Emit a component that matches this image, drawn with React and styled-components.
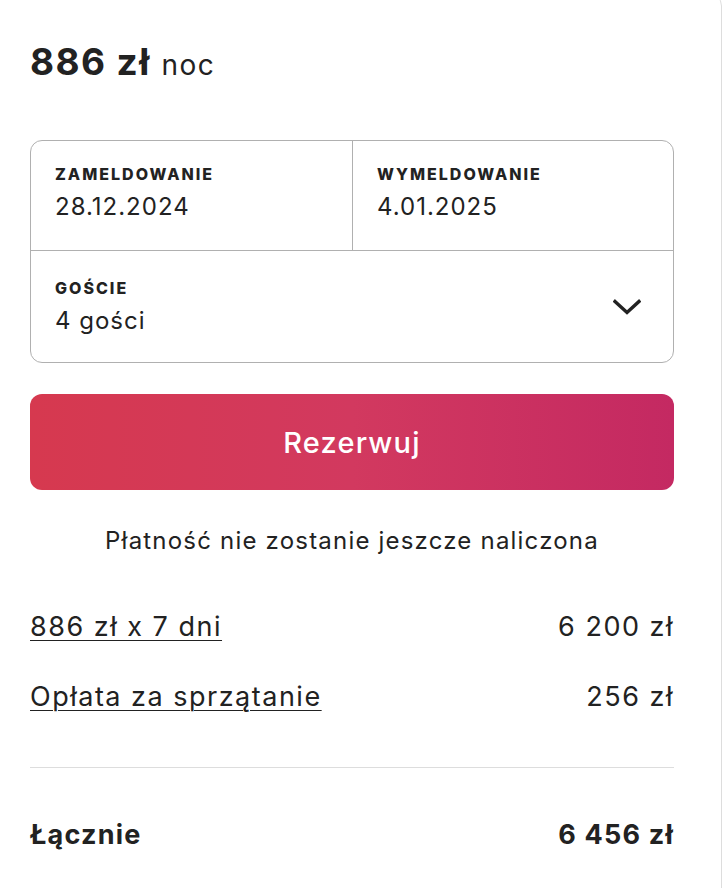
import styled, { createGlobalStyle } from "styled-components";

const GlobalStyle = createGlobalStyle`
  html, body {
    margin: 0;
    padding: 0;
    background: #fff;
    overflow: hidden;
  }
  body {
    font-family: Inter, "Noto Sans", "Liberation Sans", sans-serif;
    color: #222;
  }
`;

const fees = [
  { label: "886 zł x 7 dni", value: "6 200 zł" },
  { label: "Opłata za sprzątanie", value: "256 zł" },
];

function App() {
  return (
    <>
      <GlobalStyle />
      <Page>
        <Card>
          <Price>
            <Amount>886 zł</Amount>
            <Unit>noc</Unit>
          </Price>

          <Picker>
            <Cell>
              <Label>Zameldowanie</Label>
              <Value>28.12.2024</Value>
            </Cell>
            <Cell $divider>
              <Label>Wymeldowanie</Label>
              <Value>4.01.2025</Value>
            </Cell>
            <GuestCell>
              <div>
                <Label>Goście</Label>
                <Value>4 gości</Value>
              </div>
              <svg width="28" height="16" viewBox="0 0 28 16" fill="none">
                <path
                  d="M2 2.5 L14 13.5 L26 2.5"
                  stroke="#222"
                  strokeWidth="3.4"
                  strokeLinecap="square"
                />
              </svg>
            </GuestCell>
          </Picker>

          <ReserveButton>Rezerwuj</ReserveButton>
          <Note>Płatność nie zostanie jeszcze naliczona</Note>

          <FeeList>
            {fees.map((f) => (
              <FeeRow key={f.label}>
                <FeeLink>{f.label}</FeeLink>
                <span>{f.value}</span>
              </FeeRow>
            ))}
          </FeeList>

          <Divider />

          <TotalRow>
            <span>Łącznie</span>
            <span>6 456 zł</span>
          </TotalRow>
        </Card>
      </Page>
    </>
  );
}

export default App;

const Page = styled.div`
  width: 724px;
  height: 888px;
  overflow: hidden;
`;

const Card = styled.div`
  margin: -8px 2px 0 -30px;
  padding: 46px 47px 200px 59px;
  border: 1px solid #dddddd;
  border-radius: 14px;
`;

const Price = styled.div`
  display: flex;
  align-items: baseline;
  gap: 11px;
  height: 52px;
`;

const Amount = styled.span`
  font-size: 37px;
  font-weight: 700;
  letter-spacing: 1.4px;
`;

const Unit = styled.span`
  font-size: 28px;
  font-weight: 400;
  letter-spacing: 1.4px;
`;

const Picker = styled.div`
  margin-top: 49px;
  display: grid;
  grid-template-columns: 1fr 1fr;
  border: 1px solid #b0b0b0;
  border-radius: 12px;
`;

const Cell = styled.div`
  height: 110px;
  padding: 0 24px 5px;
  box-sizing: border-box;
  display: flex;
  flex-direction: column;
  justify-content: center;
  border-bottom: 1px solid #b0b0b0;
  border-left: ${(p) => (p.$divider ? "1px solid #b0b0b0" : "none")};
`;

const GuestCell = styled.div`
  grid-column: 1 / 3;
  height: 111px;
  padding: 0 32px 0 24px;
  display: flex;
  align-items: center;
  justify-content: space-between;
`;

const Label = styled.div`
  font-size: 16px;
  font-weight: 800;
  text-transform: uppercase;
  letter-spacing: 2px;
  line-height: 20px;
`;

const Value = styled.div`
  margin-top: 8px;
  font-size: 24px;
  letter-spacing: 1px;
  line-height: 30px;
`;

const ReserveButton = styled.button`
  display: block;
  width: 100%;
  height: 96px;
  margin-top: 31px;
  border: none;
  border-radius: 12px;
  background: linear-gradient(to right, #d6394f 0%, #d2395f 50%, #c42962 100%);
  color: #fff;
  font-family: inherit;
  font-size: 29px;
  font-weight: 500;
  letter-spacing: 1.2px;
  cursor: pointer;
`;

const Note = styled.p`
  margin: 36px 0 0;
  text-align: center;
  font-size: 24px;
  letter-spacing: 1.2px;
  line-height: 30px;
`;

const FeeList = styled.div`
  margin-top: 35px;
`;

const FeeRow = styled.div`
  display: flex;
  justify-content: space-between;
  align-items: center;
  height: 70px;
  font-size: 27px;
  letter-spacing: 1.5px;
`;

const FeeLink = styled.span`
  text-decoration: underline;
  text-decoration-thickness: 1px;
  text-underline-offset: 4px;
`;

const Divider = styled.hr`
  margin: 36px 0 0;
  border: none;
  border-top: 1px solid #dddddd;
`;

const TotalRow = styled.div`
  display: flex;
  justify-content: space-between;
  align-items: center;
  height: 70px;
  margin-top: 31px;
  font-size: 27px;
  font-weight: 700;
  letter-spacing: 1.2px;
`;
